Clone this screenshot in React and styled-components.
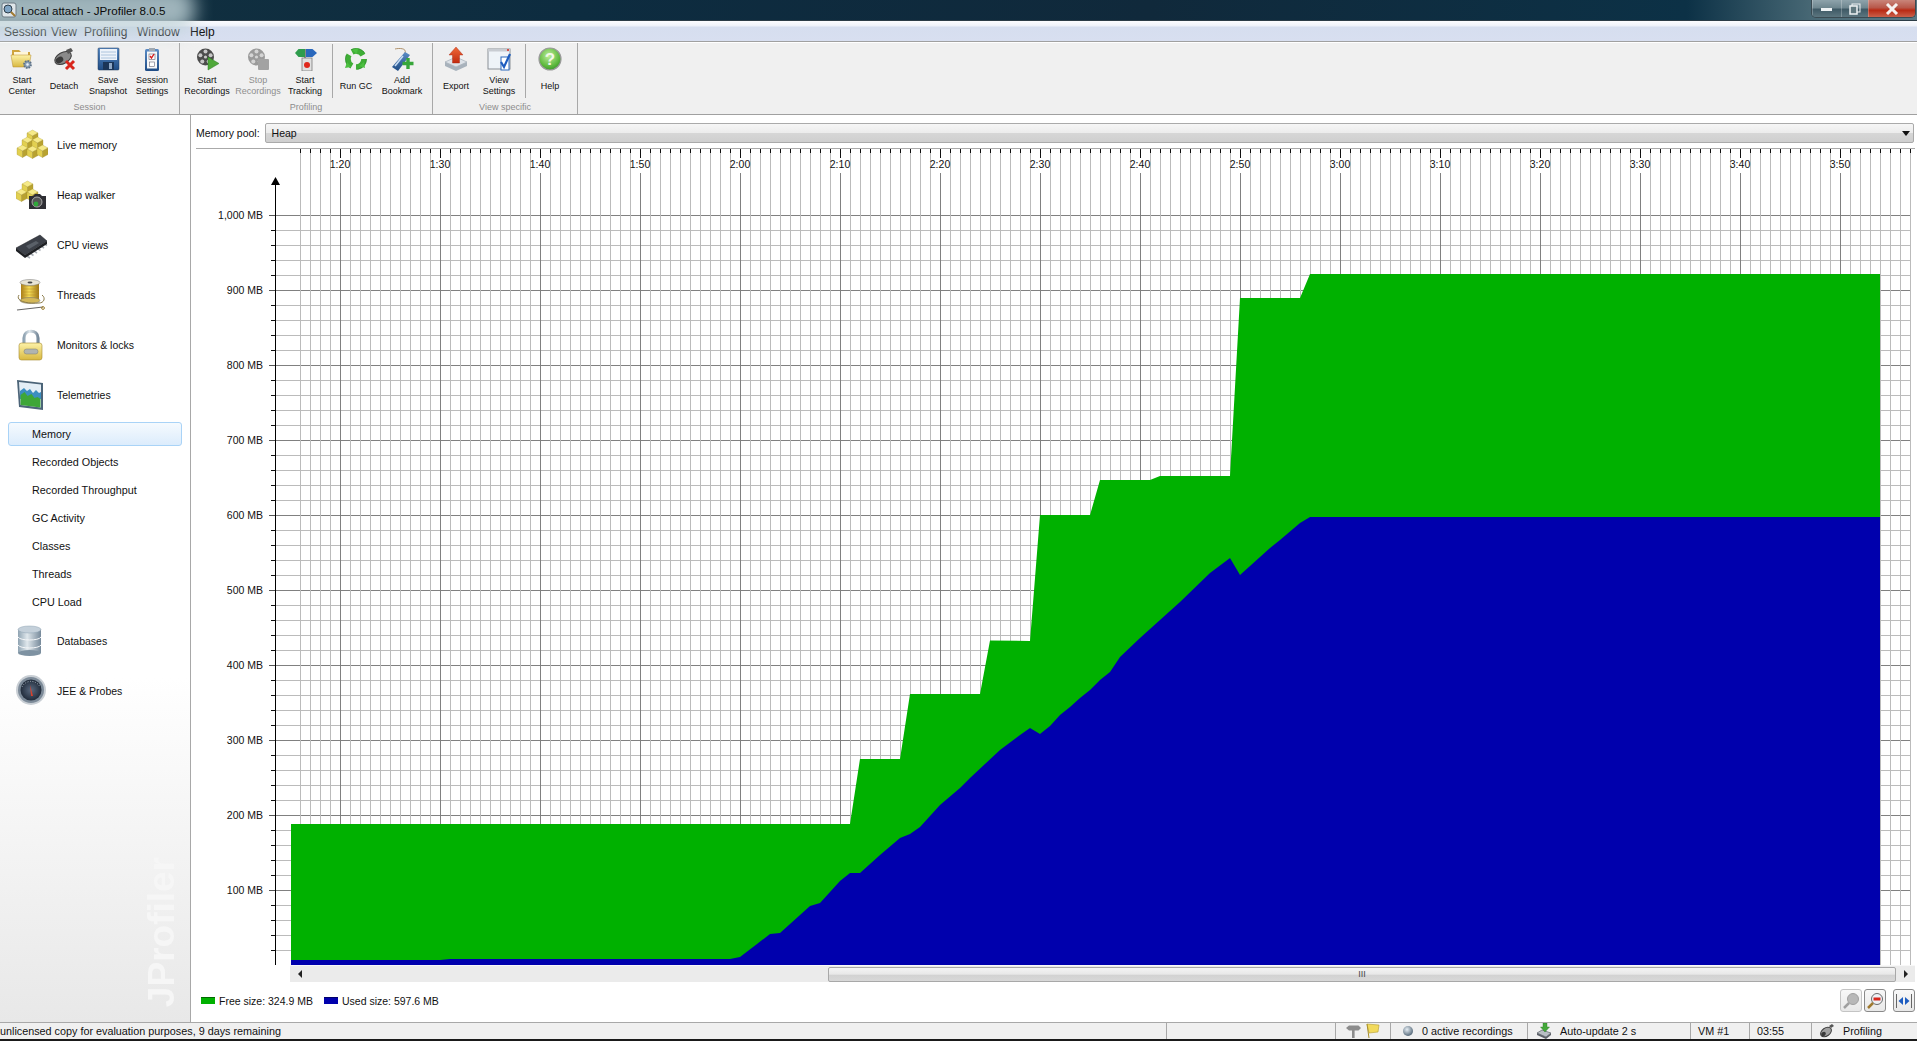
import React from "react";
import styled, { createGlobalStyle } from "styled-components";

const Global = createGlobalStyle`
  html, body { margin: 0; padding: 0; background: #fff; height: 1041px; overflow: hidden; }
  body { font-family: "Liberation Sans", Arial, sans-serif; font-size: 10.5px; color: #111; }
`;

const Win = styled.div`
  width: 1917px;
  height: 1041px;
  display: flex;
  flex-direction: column;
  overflow: hidden;
`;

/* ---------- title bar ---------- */
const TitleBar = styled.div`
  height: 21px;
  flex: none;
  display: flex;
  align-items: flex-start;
  justify-content: space-between;
  background: linear-gradient(90deg, #12303f 0%, #0d2c40 30%, #10293b 60%, #0c3146 88%, #4c6c78 95%, #5a7884 100%);
  border-bottom: 1px solid #2c3c46;
  box-sizing: border-box;
  position: relative;
`;
const TitleGlow = styled.div`
  position: absolute;
  left: -30px;
  top: -14px;
  width: 225px;
  height: 46px;
  background: rgba(190, 210, 215, 0.82);
  filter: blur(9px);
  border-radius: 20px;
`;
const TitleLeft = styled.div`
  position: relative;
  display: flex;
  align-items: center;
  gap: 4px;
  height: 20px;
  padding-left: 1px;
  font-size: 11.6px;
  color: #0a0a0a;
`;
const WinButtons = styled.div`
  position: relative;
  display: flex;
  margin-right: 1px;
  height: 17px;
  border: 1px solid #3a4a52;
  border-top: none;
  border-radius: 0 0 5px 5px;
  overflow: hidden;
`;
const WinButton = styled.div`
  width: ${(p) => p.$w}px;
  display: flex;
  align-items: center;
  justify-content: center;
  border-left: 1px solid rgba(255, 255, 255, 0.25);
  background: ${(p) =>
    p.$close
      ? "linear-gradient(180deg,#c9857a 0%,#b8584a 45%,#b92a14 60%,#c9604a 100%)"
      : "linear-gradient(180deg,#8ea3ab 0%,#6f8790 45%,#3f5a66 55%,#5c757f 100%)"};
`;

/* ---------- menu ---------- */
const MenuBar = styled.div`
  height: 21px;
  flex: none;
  box-sizing: border-box;
  border-bottom: 1px solid #a0a0a0;
  background: linear-gradient(180deg, #fbfcfe 0%, #f0f3fa 22%, #d6deef 32%, #d8dff0 100%);
  display: flex;
  align-items: center;
  padding: 1px 0 0 4px;
  font-size: 12px;
  color: #111;
`;
const MenuItem = styled.span`
  width: ${(p) => p.$w}px;
  flex: none;
`;

/* ---------- toolbar ---------- */
const Toolbar = styled.div`
  height: 72px;
  margin-top: 1px;
  flex: none;
  box-sizing: border-box;
  background: #f0f0f0;
  border-bottom: 1px solid #a0a0a0;
  display: flex;
`;
const Group = styled.div`
  width: ${(p) => p.$w}px;
  box-sizing: border-box;
  flex: none;
  border-right: 1px solid #a8a8a8;
  display: flex;
  flex-direction: column;
`;
const GroupItems = styled.div`
  height: 55px;
  display: flex;
  padding-top: 1px;
  box-sizing: border-box;
`;
const GroupLabel = styled.div`
  flex: 1;
  text-align: center;
  font-size: 9px;
  color: #8c8c8c;
  padding-top: 2px;
  line-height: 14px;
`;
const Section = styled.div`
  display: flex;
  width: ${(p) => p.$w}px;
  flex: none;
  box-sizing: border-box;
  border-right: ${(p) => (p.$divided ? "1px solid #a8a8a8" : "none")};
`;
const ToolItem = styled.div`
  width: ${(p) => p.$w}px;
  flex: none;
  display: flex;
  flex-direction: column;
  align-items: center;
  font-size: 9px;
  line-height: 11px;
  text-align: center;
  color: ${(p) => (p.$off ? "#8e8e8e" : "#111")};
  white-space: pre-line;
`;
const ToolIcon = styled.div`
  height: 27px;
  display: flex;
  align-items: flex-end;
`;
const ToolText = styled.div`
  height: 22px;
  margin-top: 4px;
  display: flex;
  align-items: center;
`;

/* ---------- main ---------- */
const Main = styled.div`
  flex: 1;
  display: flex;
  min-height: 0;
`;
const Sidebar = styled.div`
  width: 191px;
  flex: none;
  box-sizing: border-box;
  border-right: 1px solid #a8a8a8;
  padding-top: 5px;
  background: linear-gradient(180deg, #fff 0%, #fff 62%, #e8e8e8 100%);
  position: relative;
  overflow: hidden;
`;
const NavItem = styled.div`
  height: 50px;
  display: flex;
  align-items: center;
  padding-left: 16px;
  gap: 9px;
`;
const SubItem = styled.div`
  height: 28px;
  display: flex;
  align-items: center;
  padding-left: 32px;
  font-size: 10.8px;
`;
const SubItemOn = styled(SubItem)`
  height: 24px;
  margin: 2px 8px 2px 8px;
  padding-left: 23px;
  box-sizing: border-box;
  border: 1px solid #a9d3f7;
  border-radius: 3px;
  background: linear-gradient(180deg, #f5fafe 0%, #dcecfc 100%);
`;
const Watermark = styled.div`
  position: absolute;
  left: 141px;
  bottom: 15px;
  writing-mode: vertical-rl;
  transform: rotate(180deg);
  font-size: 37px;
  font-weight: bold;
  line-height: 42px;
  color: #f6f6f6;
`;

const Content = styled.div`
  flex: 1;
  min-width: 0;
  display: flex;
  flex-direction: column;
  padding: 0 2px 0 5px;
  background: #fff;
`;
const PoolRow = styled.div`
  height: 34px;
  flex: none;
  box-sizing: border-box;
  border-bottom: 1px solid #aaa;
  display: flex;
  align-items: center;
  gap: 5px;
  padding-top: 3px;
`;
const Combo = styled.div`
  flex: 1;
  height: 20px;
  box-sizing: border-box;
  margin-right: 1px;
  border: 1px solid #aaa;
  border-radius: 2px;
  padding: 0 3px 0 6px;
  display: flex;
  align-items: center;
  justify-content: space-between;
  background: linear-gradient(180deg, #f6f6f6 0%, #ececec 48%, #d6d6d6 52%, #cfcfcf 100%);
`;
const ComboArrow = styled.div`
  width: 0;
  height: 0;
  border-left: 4px solid transparent;
  border-right: 4px solid transparent;
  border-top: 5px solid #111;
`;
const Chart = styled.svg`
  display: block;
  flex: none;
  width: 1719px;
  height: 816px;
  font-family: "Liberation Sans", Arial, sans-serif;
  font-size: 10.5px;
`;
const ScrollRow = styled.div`
  height: 17px;
  flex: none;
  margin-left: 94px;
  background: #ebebeb;
  border-top: 1px solid #f8f8f8;
  box-sizing: border-box;
  display: flex;
  align-items: center;
`;
const ScrollArrow = styled.div`
  width: 19px;
  flex: none;
  display: flex;
  justify-content: center;
`;
const ScrollGap = styled.div`
  width: ${(p) => p.$w}px;
  flex: none;
`;
const ScrollThumb = styled.div`
  flex: 1;
  height: 15px;
  box-sizing: border-box;
  border: 1px solid #a8a8a8;
  border-radius: 2px;
  display: flex;
  align-items: center;
  justify-content: center;
  font-size: 9px;
  color: #444;
  background: linear-gradient(180deg, #f4f4f4 0%, #e8e8e8 48%, #d2d2d2 55%, #d8d8d8 100%);
`;
const Tri = styled.div`
  width: 0;
  height: 0;
  border-top: 4px solid transparent;
  border-bottom: 4px solid transparent;
  border-${(p) => (p.$dir === "left" ? "right" : "left")}: 4px solid #222;
`;
const LegendRow = styled.div`
  flex: 1;
  display: flex;
  align-items: center;
  padding: 0 0 3px 5px;
`;
const Swatch = styled.span`
  width: 14px;
  height: 6px;
  background: ${(p) => p.$c};
  border-top: 1px solid ${(p) => p.$b};
  margin-right: 4px;
`;
const LegendText = styled.span`
  margin-right: 11px;
`;
const Grow = styled.div`
  flex: 1;
`;
const ZoomBtn = styled.div`
  width: 22px;
  height: 23px;
  box-sizing: border-box;
  border: 1px solid ${(p) => (p.$off ? "#c4c4c4" : "#8a8a8a")};
  border-radius: 3px;
  margin-left: ${(p) => p.$gap || 2}px;
  display: flex;
  align-items: center;
  justify-content: center;
  background: linear-gradient(180deg, #f8f8f8, #e8e8e8);
`;

/* ---------- status bar ---------- */
const StatusBar = styled.div`
  height: 19px;
  flex: none;
  box-sizing: border-box;
  background: #f0f0f0;
  border-top: 1px solid #a8a8a8;
  border-bottom: 2px solid #1a1a1a;
  display: flex;
  font-size: 10.8px;
`;
const Cell = styled.div`
  width: ${(p) => p.$w}px;
  flex: ${(p) => (p.$w ? "none" : "1")};
  box-sizing: border-box;
  display: flex;
  align-items: center;
  gap: ${(p) => p.$gap || 0}px;
  padding-left: ${(p) => p.$pad || 0}px;
  border-right: ${(p) => (p.$last ? "none" : "1px solid #a8a8a8")};
  white-space: nowrap;
`;

/* ---------- icons ---------- */
const IconSvg = styled.svg`
  display: block;
  flex: none;
  width: ${(p) => p.$s}px;
  height: ${(p) => p.$s}px;
`;
const DefsSvg = styled.svg`
  position: absolute;
  width: 0;
  height: 0;
`;
const Defs = () => (
  <DefsSvg>
    <defs>
      <linearGradient id="gold" x1="0" y1="0" x2="0" y2="1">
        <stop offset="0" stopColor="#fdf2a8" />
        <stop offset="1" stopColor="#d8b840" />
      </linearGradient>
      <linearGradient id="goldh" x1="0" y1="0" x2="1" y2="0">
        <stop offset="0" stopColor="#a87c18" />
        <stop offset=".45" stopColor="#f6de58" />
        <stop offset="1" stopColor="#9c7414" />
      </linearGradient>
      <linearGradient id="steel" x1="0" y1="0" x2="1" y2="0">
        <stop offset="0" stopColor="#8fa3b2" />
        <stop offset=".4" stopColor="#dfe7ec" />
        <stop offset="1" stopColor="#76899a" />
      </linearGradient>
      <linearGradient id="navy" x1="0" y1="0" x2="0" y2="1">
        <stop offset="0" stopColor="#5a8cc6" />
        <stop offset="1" stopColor="#1f4c85" />
      </linearGradient>
      <linearGradient id="redup" x1="0" y1="0" x2="0" y2="1">
        <stop offset="0" stopColor="#f06a3a" />
        <stop offset="1" stopColor="#c02a10" />
      </linearGradient>
      <radialGradient id="greenball" cx=".45" cy=".35" r=".7">
        <stop offset="0" stopColor="#c0ee9c" />
        <stop offset=".7" stopColor="#5cb83c" />
        <stop offset="1" stopColor="#34902a" />
      </radialGradient>
      <radialGradient id="dial" cx=".5" cy=".5" r=".55">
        <stop offset="0" stopColor="#5a6a80" />
        <stop offset="1" stopColor="#1c2634" />
      </radialGradient>
      <radialGradient id="ball" cx=".4" cy=".35" r=".7">
        <stop offset="0" stopColor="#e6eef4" />
        <stop offset="1" stopColor="#4d6172" />
      </radialGradient>
    </defs>
  </DefsSvg>
);
const Ico = ({ s = 24, vb = 24, children }) => (
  <IconSvg $s={s} viewBox={`0 0 ${vb} ${vb}`}>
    {children}
  </IconSvg>
);

const Cube = ({ x, y, s = 9 }) => (
  <g>
    <path d={`M${x} ${y + s * 0.3}L${x + s * 0.55} ${y}L${x + s * 1.1} ${y + s * 0.3}L${x + s * 0.55} ${y + s * 0.6}Z`} fill="#f6ea88" stroke="#a89428" strokeWidth=".3" />
    <path d={`M${x} ${y + s * 0.3}L${x + s * 0.55} ${y + s * 0.6}V${y + s * 1.25}L${x} ${y + s * 0.95}Z`} fill="#e2d050" stroke="#a08a28" strokeWidth=".3" />
    <path d={`M${x + s * 1.1} ${y + s * 0.3}L${x + s * 0.55} ${y + s * 0.6}V${y + s * 1.25}L${x + s * 1.1} ${y + s * 0.95}Z`} fill="#b8a230" stroke="#a08a28" strokeWidth=".3" />
  </g>
);

const Reel = ({ c = "#4c4c4c", h = "#c8c8c8" }) => (
  <g>
    <circle cx="10.5" cy="10" r="8.5" fill={c} />
    <circle cx="10.5" cy="10" r="1.6" fill={h} />
    {[[10.5, 4.6], [15.6, 8.3], [13.7, 14.4], [7.3, 14.4], [5.4, 8.3]].map(([x, y]) => (
      <circle key={x} cx={x} cy={y} r="2" fill={h} />
    ))}
  </g>
);

const icons = {
  center: (
    <Ico>
      <path d="M2 3h7l2 2h9v8H2z" fill="#cfa43e" />
      <path d="M4 5h14v8H4z" fill="#fff6d8" />
      <path d="M1 8h20l-2 12H3z" fill="url(#gold)" stroke="#b48a2c" strokeWidth=".5" />
      <circle cx="17.5" cy="17.500" r="3.4" fill="#8ea4ba" stroke="#5c7086" strokeWidth="2" strokeDasharray="1.6 1" />
      <circle cx="17.5" cy="17.500" r="1.2" fill="#eef2f6" />
    </Ico>
  ),
  detach: (
    <Ico>
      <ellipse cx="11" cy="11" rx="9" ry="5.5" transform="rotate(-30 11 11)" fill="#8a8a8a" stroke="#3e3e3e" />
      <ellipse cx="7.5" cy="13" rx="4" ry="3" transform="rotate(-30 7.5 13)" fill="#3a3a3a" />
      <path d="M14 3l5-2 2 3-5 3z" fill="#555" />
      <path d="M14 14l8 8M22 14l-8 8" stroke="#d8261c" strokeWidth="3" />
    </Ico>
  ),
  save: (
    <Ico>
      <rect x="2" y="1" width="21" height="22" rx="1" fill="url(#navy)" stroke="#1b3558" strokeWidth=".5" />
      <rect x="4" y="2" width="17" height="11" fill="#eef3fa" />
      <path d="M5 5h15M5 8h15M5 11h15" stroke="#9db7d6" strokeWidth=".8" />
      <rect x="7" y="15" width="11" height="8" fill="#1b3558" />
      <rect x="13" y="16" width="3" height="6" fill="#8fa8c6" />
    </Ico>
  ),
  settings: (
    <Ico>
      <rect x="5" y="2" width="14" height="22" rx="1.5" fill="url(#navy)" />
      <rect x="7" y="4.5" width="10" height="17" fill="#f8f8f8" />
      <rect x="9" y="1" width="6" height="3" fill="#a0a8b0" />
      <rect x="9" y="7" width="6" height="5.5" fill="#fff" stroke="#667" strokeWidth=".6" />
      <path d="M10 9l1.5 2 2.5-4" stroke="#d41c1c" strokeWidth="1.4" fill="none" />
      <rect x="9.5" y="15" width="5" height="4.5" fill="#fff" stroke="#667" strokeWidth=".6" />
    </Ico>
  ),
  rec: (
    <Ico>
      <Reel />
      <path d="M13 10l11 6.5-11 6.5z" fill="#4fa83a" stroke="#2c7a24" strokeWidth=".5" />
    </Ico>
  ),
  stop: (
    <Ico>
      <Reel c="#9a9a9a" h="#d4d4d4" />
      <rect x="12" y="12" width="11" height="11" rx="1" fill="#a2a2a2" />
    </Ico>
  ),
  track: (
    <Ico>
      <rect x="11" y="2" width="2" height="10" fill="#8a8a8a" />
      <path d="M2 6l3.5-4H12v8H5.5z" fill="#2e9c4c" />
      <path d="M13 2h6.5L24 6l-4.5 4H13z" fill="#2a68bc" />
      <rect x="9" y="11" width="10" height="13" fill="#e0e0e0" stroke="#7c7c7c" strokeWidth=".8" />
      <circle cx="14" cy="18" r="3" fill="#e0281c" />
    </Ico>
  ),
  gc: (
    <Ico>
      <circle cx="12" cy="12" r="8" fill="none" stroke="#3fae36" strokeWidth="5.5" strokeDasharray="12.5 4.2" />
      <circle cx="12" cy="12" r="10.5" fill="none" stroke="#1f7a20" strokeWidth=".5" strokeDasharray="15 7" />
      <path d="M8 3l6-2-1 6zM20 15l1 6-6-2zM3 15l4 5-6 1z" fill="#4cc040" />
    </Ico>
  ),
  bookmark: (
    <Ico>
      <path d="M15 6C17 1 9 1 5 2" stroke="#a07a4a" fill="none" strokeWidth=".8" />
      <path d="M2 20L15 5l5 3L8 24z" fill="url(#navy)" />
      <path d="M13 9L5 19" stroke="#c8dcf2" strokeWidth="1.6" />
      <path d="M18 11v11M12.5 16.5h11" stroke="#37a63a" strokeWidth="3.4" />
    </Ico>
  ),
  exportIt: (
    <Ico>
      <path d="M1 15l11-5 11 5-11 5z" fill="#dde2e8" stroke="#8a96a2" strokeWidth=".5" />
      <path d="M1 15v4l11 5v-4zM23 15v4l-11 5v-4z" fill="#a8b2bc" />
      <path d="M12 0l7 8h-3.5v8h-7V8H5z" fill="url(#redup)" stroke="#a82410" strokeWidth=".4" />
    </Ico>
  ),
  view: (
    <Ico>
      <rect x="1" y="2" width="22" height="20" fill="#eef3f8" stroke="#8a8f96" />
      <rect x="1" y="2" width="22" height="2.5" fill="#c8ccd2" />
      <circle cx="21" cy="3" r="1" fill="#d8261c" />
      <rect x="14" y="10" width="8" height="13" fill="#fff" stroke="#2a68bc" />
      <path d="M14 15l3 5 6-13" stroke="#1c5cc0" strokeWidth="2.2" fill="none" />
    </Ico>
  ),
  help: (
    <Ico>
      <circle cx="12" cy="12" r="11" fill="url(#greenball)" stroke="#9a9a9a" strokeWidth="1.2" />
      <text x="12" y="18" textAnchor="middle" fontSize="17" fontWeight="bold" fill="#f2f8e8" fontFamily="Liberation Sans, sans-serif">?</text>
    </Ico>
  ),
  live: (
    <Ico s={32} vb={32}>
      <Cube x={11} y={1} s={10} />
      <Cube x={6} y={8} s={10} />
      <Cube x={16} y={8} s={10} />
      <Cube x={1} y={16} s={10} />
      <Cube x={11} y={17} s={10} />
      <Cube x={21} y={16} s={10} />
    </Ico>
  ),
  heap: (
    <Ico s={32} vb={32}>
      <Cube x={6} y={2} s={10} />
      <Cube x={0} y={10} s={10} />
      <Cube x={11} y={10} s={10} />
      <path d="M13 17h4l2-2h5l2 2h4v13H13z" fill="#2e2e34" />
      <circle cx="21" cy="23" r="5" fill="#555" stroke="#aaa" />
      <circle cx="20" cy="25" r="2.4" fill="#2fa83a" />
    </Ico>
  ),
  cpu: (
    <Ico s={32} vb={32}>
      <path d="M11 27l3 2M14.500 24.500l3 2M18 22l3 2M21.500 19.500l3 2M25 17l3 2M28 14.500l3 2" stroke="#a8aeb4" strokeWidth="1.6" />
      <path d="M0 19L24 6l7 6L9 26z" fill="#3c4048" stroke="#1c1e22" strokeWidth=".5" />
      <path d="M0 19L9 26v3L0 22zM9 26L31 12v3L9 29z" fill="#1e2024" />
      <path d="M10 17l10-5 3 2-10 6z" fill="#5a6068" />
    </Ico>
  ),
  thread: (
    <Ico s={32} vb={32}>
      <rect x="5" y="3" width="18" height="18" fill="url(#goldh)" />
      <path d="M5 7h18M5 10h18M5 13h18M5 16h18M5 19h18" stroke="#b88a20" strokeWidth=".5" />
      <ellipse cx="14" cy="3.500" rx="10" ry="3" fill="#e8e4d4" stroke="#777" strokeWidth=".5" />
      <ellipse cx="14" cy="3.500" rx="2.500" ry="1" fill="#444" />
      <ellipse cx="14" cy="21.500" rx="10" ry="3" fill="#d4b858" stroke="#777" strokeWidth=".5" />
      <path d="M3 16c-4 6 8 9 20 8 5 0 7-5 3-8" fill="none" stroke="#8a7a48" />
      <path d="M1 31l26-3" stroke="#666" strokeWidth="1.2" />
      <circle cx="27" cy="29" r="1.400" fill="none" stroke="#a08030" />
    </Ico>
  ),
  lock: (
    <Ico s={32} vb={32}>
      <path d="M8 15V9c0-9 14-9 14 0v6" fill="none" stroke="url(#steel)" strokeWidth="3.2" />
      <rect x="3" y="14" width="23" height="17" rx="2.5" fill="url(#gold)" stroke="#a68a30" strokeWidth=".6" />
      <rect x="8" y="20" width="14" height="5" rx="2.5" fill="#b0b4b0" stroke="#7c7c6c" strokeWidth=".5" />
    </Ico>
  ),
  tele: (
    <Ico s={32} vb={32}>
      <path d="M1 1l26 3v27L3 28z" fill="#4c6478" />
      <path d="M3 3l22 2.5v23L4.5 26z" fill="#e4eef6" />
      <path d="M4 12l4-3 3 3 3-2 3 4 3-3 3 3 2-1v7H4z" fill="#3c8ec0" />
      <path d="M4.5 16l4-3 3 4 4-2 3 4 3-1 3 2v8.5L4.5 26z" fill="#3ea638" />
    </Ico>
  ),
  db: (
    <Ico s={32} vb={32}>
      <rect x="2" y="4" width="23" height="24" fill="url(#steel)" />
      <ellipse cx="13.5" cy="28" rx="11.5" ry="3" fill="#7e92a2" />
      <path d="M2 12c2 4 21 4 23 0M2 20c2 4 21 4 23 0" fill="none" stroke="#f4f6f8" strokeWidth="1" />
      <ellipse cx="13.5" cy="4.5" rx="11.5" ry="3.5" fill="#c4d0da" stroke="#8fa3b2" strokeWidth=".5" />
    </Ico>
  ),
  jee: (
    <Ico s={32} vb={32}>
      <circle cx="15" cy="15" r="15" fill="#c8ced4" />
      <circle cx="15" cy="15" r="13" fill="#7c8a98" />
      <circle cx="15" cy="15" r="10.5" fill="url(#dial)" />
      <path d="M14 10l3 11-2 0z" fill="#d8402c" />
      <path d="M6 12a10 10 0 0 1 18 0" fill="none" stroke="#a8b4c0" strokeWidth="1" strokeDasharray="1 1.5" />
    </Ico>
  ),
  mini: (
    <Ico s={16} vb={16}>
      <rect x="1" y="1" width="14" height="14" rx="2" fill="#dfe6ea" stroke="#6c7a84" />
      <circle cx="7" cy="7" r="4" fill="#7ea4c4" stroke="#2c3c48" />
      <path d="M10 10l4 4" stroke="#a07a30" strokeWidth="2" />
    </Ico>
  ),
  pin: (
    <Ico s={16} vb={16}>
      <path d="M1 5l3-2.5h9.5L16 5l-2.5 2.5H4z" fill="#8c8c8c" />
      <rect x="7" y="7" width="2.6" height="8" fill="#8c8c8c" />
    </Ico>
  ),
  flag: (
    <Ico s={16} vb={16}>
      <path d="M2 1l12 1-1 7-9 1z" fill="#f2da5c" stroke="#b49c30" strokeWidth=".6" />
      <path d="M2 1l2 14" stroke="#a8902c" strokeWidth="1" />
    </Ico>
  ),
  ball: (
    <Ico s={12} vb={12}>
      <circle cx="6" cy="6" r="5" fill="url(#ball)" />
    </Ico>
  ),
  auto: (
    <Ico s={16} vb={16}>
      <path d="M1 10l5-3 9 3-5 4z" fill="#b8bec4" stroke="#4c5058" strokeWidth=".6" />
      <path d="M1 10v2l9 4 5-4v-2l-5 4z" fill="#5c6068" />
      <path d="M7 0h4v4h2.5L9 9 4.500 4H7z" fill="#44a83a" stroke="#2a7a24" strokeWidth=".4" />
    </Ico>
  ),
  plug: (
    <Ico s={16} vb={16}>
      <ellipse cx="7" cy="9" rx="6" ry="4" transform="rotate(-35 7 9)" fill="#a0a0a0" stroke="#3e3e3e" />
      <ellipse cx="4.500" cy="11" rx="2.500" ry="2" transform="rotate(-35 4.500 11)" fill="#3a3a3a" />
      <path d="M10 3l3-2 2 2-3 2z" fill="#555" />
    </Ico>
  ),
};

/* ---------- chart data (page pixels) ---------- */
const CHART_X = 196;
const CHART_Y = 149;
const BOTTOM = 965;
const RIGHT = 1911;

const freeTop = [
  [291, 824], [850, 824], [860, 759], [900, 759], [910, 694], [980, 694], [990, 640.5],
  [1030, 641], [1040, 515], [1090, 515], [1100, 480], [1150, 480], [1160, 476], [1230, 476],
  [1240, 298], [1300, 298], [1310, 274], [1880, 274],
];
const usedTop = [
  [291, 960], [440, 960], [450, 959], [730, 959], [740, 957], [757, 944], [770, 934], [780, 933],
  [810, 906], [820, 903], [840, 881], [850, 873], [860, 873], [880, 855], [900, 838], [910, 834],
  [920, 827], [940, 805], [960, 788], [970, 778], [1000, 750], [1020, 735], [1030, 728], [1040, 734],
  [1050, 726], [1060, 715], [1070, 707], [1080, 698], [1090, 690], [1100, 680], [1110, 672],
  [1120, 657], [1140, 638], [1160, 620], [1180, 602], [1210, 573], [1230, 558], [1240, 575],
  [1270, 548], [1280, 540], [1300, 523], [1310, 517], [1880, 517],
];
const area = (pts) =>
  [...pts, [pts[pts.length - 1][0], BOTTOM], [pts[0][0], BOTTOM]].map((p) => p.join(",")).join(" ");

const vLines = [];
for (let x = 300; x <= 1910; x += 10) vLines.push(x);
const hLines = [];
for (let y = 215; y < BOTTOM; y += 15) hLines.push(y);
const timeLabels = [
  "1:20", "1:30", "1:40", "1:50", "2:00", "2:10", "2:20", "2:30", "2:40", "2:50",
  "3:00", "3:10", "3:20", "3:30", "3:40", "3:50",
];
const mbLabels = ["1,000 MB", "900 MB", "800 MB", "700 MB", "600 MB", "500 MB", "400 MB", "300 MB", "200 MB", "100 MB"];

const MemoryChart = () => (
  <Chart viewBox={`${CHART_X} ${CHART_Y} 1719 816`}>
    <g shapeRendering="crispEdges">
      {hLines.map((y, i) => (
        <line key={y} x1={i % 5 === 0 ? 269 : 271} x2={RIGHT} y1={y + 0.5} y2={y + 0.5} stroke={i % 5 === 0 ? "#808080" : "#bbb"} />
      ))}
      {hLines.map((y, i) => (
        <line key={y} x1={i % 5 === 0 ? 269 : 271} x2={276} y1={y + 0.5} y2={y + 0.5} stroke={i % 5 === 0 ? "#555" : "#111"} />
      ))}
      {vLines.map((x) => {
        const major = (x - 340) % 100 === 0;
        return (
          <g key={x}>
            {major ? (
              <line x1={x + 0.5} x2={x + 0.5} y1={173} y2={BOTTOM} stroke="#808080" />
            ) : (
              <line x1={x + 0.5} x2={x + 0.5} y1={149} y2={BOTTOM} stroke="#bbb" />
            )}
            <line x1={x + 0.5} x2={x + 0.5} y1={149} y2={major ? 158 : 153} stroke="#111" />
          </g>
        );
      })}
      <line x1={275.5} x2={275.5} y1={180} y2={BOTTOM} stroke="#000" strokeWidth="1" />
    </g>
    <path d="M275.5 177l4.500 8h-9z" fill="#000" />
    <polygon points={area(freeTop)} fill="#00b100" />
    <polygon points={area(usedTop)} fill="#0000ad" />
    {timeLabels.map((t, i) => (
      <text key={t} x={340 + i * 100} y={168} textAnchor="middle" fill="#111">{t}</text>
    ))}
    {mbLabels.map((t, i) => (
      <text key={t} x={263} y={219 + i * 75} textAnchor="end" fill="#111">{t}</text>
    ))}
  </Chart>
);

const Tool = ({ w, icon, off, children }) => (
  <ToolItem $w={w} $off={off}>
    <ToolIcon>{icon}</ToolIcon>
    <ToolText>{children}</ToolText>
  </ToolItem>
);

export default function App() {
  const nav1 = [
    ["live", "Live memory"],
    ["heap", "Heap walker"],
    ["cpu", "CPU views"],
    ["thread", "Threads"],
    ["lock", "Monitors & locks"],
    ["tele", "Telemetries"],
  ];
  const subs = ["Recorded Objects", "Recorded Throughput", "GC Activity", "Classes", "Threads", "CPU Load"];
  return (
    <Win>
      <Global />
      <Defs />
      <TitleBar>
        <TitleGlow />
        <TitleLeft>
          {icons.mini}
          <span>Local attach - JProfiler 8.0.5</span>
        </TitleLeft>
        <WinButtons>
          <WinButton $w={28}>
            <svg width="12" height="6"><rect y="2" width="11" height="3" fill="#eef2f4" /></svg>
          </WinButton>
          <WinButton $w={26}>
            <svg width="12" height="12"><rect x="3" y="1" width="8" height="8" fill="none" stroke="#eef2f4" /><rect x="1" y="3" width="7" height="8" fill="#60787f" stroke="#eef2f4" strokeWidth="1.5" /></svg>
          </WinButton>
          <WinButton $w={46} $close>
            <svg width="14" height="12"><path d="M2 1l10 10M12 1L2 11" stroke="#f6f2f0" strokeWidth="3" /></svg>
          </WinButton>
        </WinButtons>
      </TitleBar>

      <MenuBar>
        <MenuItem $w={47}>Session</MenuItem>
        <MenuItem $w={33}>View</MenuItem>
        <MenuItem $w={53}>Profiling</MenuItem>
        <MenuItem $w={53}>Window</MenuItem>
        <MenuItem $w={30}>Help</MenuItem>
      </MenuBar>

      <Toolbar>
        <Group $w={180}>
          <GroupItems>
            <Tool w={44} icon={icons.center}>{"Start\nCenter"}</Tool>
            <Tool w={40} icon={icons.detach}>Detach</Tool>
            <Tool w={48} icon={icons.save}>{"Save\nSnapshot"}</Tool>
            <Tool w={40} icon={icons.settings}>{"Session\nSettings"}</Tool>
          </GroupItems>
          <GroupLabel>Session</GroupLabel>
        </Group>
        <Group $w={253}>
          <GroupItems>
            <Section $w={153} $divided>
              <Tool w={54} icon={icons.rec}>{"Start\nRecordings"}</Tool>
              <Tool w={48} off icon={icons.stop}>{"Stop\nRecordings"}</Tool>
              <Tool w={46} icon={icons.track}>{"Start\nTracking"}</Tool>
            </Section>
            <Section $w={98}>
              <Tool w={46} icon={icons.gc}>Run GC</Tool>
              <Tool w={46} icon={icons.bookmark}>{"Add\nBookmark"}</Tool>
            </Section>
          </GroupItems>
          <GroupLabel>Profiling</GroupLabel>
        </Group>
        <Group $w={145}>
          <GroupItems>
            <Section $w={93} $divided>
              <Tool w={46} icon={icons.exportIt}>Export</Tool>
              <Tool w={40} icon={icons.view}>{"View\nSettings"}</Tool>
            </Section>
            <Section $w={50}>
              <Tool w={48} icon={icons.help}>Help</Tool>
            </Section>
          </GroupItems>
          <GroupLabel>View specific</GroupLabel>
        </Group>
      </Toolbar>

      <Main>
        <Sidebar>
          {nav1.map(([k, t]) => (
            <NavItem key={k}>
              {icons[k]}
              <span>{t}</span>
            </NavItem>
          ))}
          <SubItemOn>Memory</SubItemOn>
          {subs.map((t) => (
            <SubItem key={t}>{t}</SubItem>
          ))}
          <NavItem>
            {icons.db}
            <span>Databases</span>
          </NavItem>
          <NavItem>
            {icons.jee}
            <span>JEE &amp; Probes</span>
          </NavItem>
          <Watermark>JProfiler</Watermark>
        </Sidebar>

        <Content>
          <PoolRow>
            <span>Memory pool:</span>
            <Combo>
              <span>Heap</span>
              <ComboArrow />
            </Combo>
          </PoolRow>
          <MemoryChart />
          <ScrollRow>
            <ScrollArrow><Tri $dir="left" /></ScrollArrow>
            <ScrollGap $w={519} />
            <ScrollThumb>III</ScrollThumb>
            <ScrollArrow><Tri $dir="right" /></ScrollArrow>
          </ScrollRow>
          <LegendRow>
            <Swatch $c="#00b100" $b="#006a00" />
            <LegendText>Free size: 324.9 MB</LegendText>
            <Swatch $c="#0000ad" $b="#00006a" />
            <LegendText>Used size: 597.6 MB</LegendText>
            <Grow />
            <ZoomBtn $off>
              <svg width="18" height="18">
                <circle cx="11" cy="7" r="5.5" fill="#b8b8b8" stroke="#a0a0a0" />
                <path d="M7 11l-5 5" stroke="#a0a0a0" strokeWidth="2.500" />
              </svg>
            </ZoomBtn>
            <ZoomBtn>
              <svg width="18" height="18">
                <circle cx="11" cy="7" r="5.5" fill="#eef2f6" stroke="#6a6a6a" />
                <rect x="7.500" y="5.500" width="7" height="3" fill="#d8261c" />
                <path d="M7 11l-5 5" stroke="#a07a30" strokeWidth="2.500" />
              </svg>
            </ZoomBtn>
            <ZoomBtn $gap={7}>
              <svg width="18" height="18">
                <path d="M1.500 2v14M16.500 2v14" stroke="#666" />
                <path d="M8 5v8L3.500 9zM10 5v8l4.500-4z" fill="#1c5cc0" />
              </svg>
            </ZoomBtn>
          </LegendRow>
        </Content>
      </Main>

      <StatusBar>
        <Cell $w={1167}>unlicensed copy for evaluation purposes, 9 days remaining</Cell>
        <Cell $w={169} />
        <Cell $w={55} $pad={9} $gap={4}>{icons.pin}{icons.flag}</Cell>
        <Cell $w={137} $pad={11} $gap={8}>{icons.ball}<span>0 active recordings</span></Cell>
        <Cell $w={163} $pad={8} $gap={8}>{icons.auto}<span>Auto-update 2 s</span></Cell>
        <Cell $w={59} $pad={7}>VM #1</Cell>
        <Cell $w={62} $pad={7}>03:55</Cell>
        <Cell $pad={7} $gap={8} $last>{icons.plug}<span>Profiling</span></Cell>
      </StatusBar>
    </Win>
  );
}
